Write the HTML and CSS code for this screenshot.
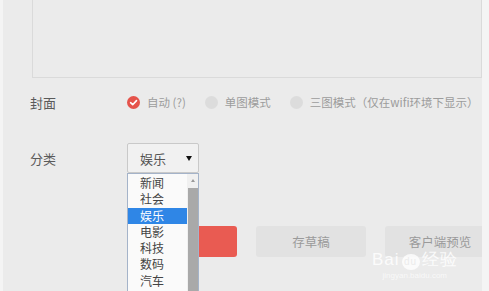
FILE: index.html
```html
<!DOCTYPE html>
<html>
<head>
    <meta charset="UTF-8">
    <meta name="viewport" content="width=device-width, initial-scale=1.0">
    <title>发布文章</title>
    <link rel="stylesheet" href="styles.css">
</head>

<body>

    <div class="panel">
        <div class="editor"></div>

        <div class="row cover-row">
            <span class="label">封面</span>
            <div class="options">
                <span class="option">
                    <span class="radio checked">
                        <svg width="13" height="13" viewBox="0 0 13 13"><path d="M3.6 6.7 L5.7 8.7 L9.5 4.6" fill="none" stroke="#fff" stroke-width="1.6" stroke-linecap="round" stroke-linejoin="round"/></svg>
                    </span>
                    自动 (?)
                </span>
                <span class="option"><span class="radio"></span>单图模式</span>
                <span class="option"><span class="radio"></span>三图模式（仅在wifi环境下显示）</span>
            </div>
        </div>

        <div class="row category-row">
            <span class="label">分类</span>
            <div class="select-wrap">
                <div class="select">
                    <span>娱乐</span>
                    <span class="arrow"></span>
                </div>
                <div class="dropdown">
                    <ul class="list">
                        <li>新闻</li>
                        <li>社会</li>
                        <li class="active">娱乐</li>
                        <li>电影</li>
                        <li>科技</li>
                        <li>数码</li>
                        <li>汽车</li>
                    </ul>
                    <div class="scrollbar">
                        <span class="up"></span>
                        <span class="thumb"></span>
                    </div>
                </div>
            </div>
        </div>

        <div class="actions">
            <button class="btn btn-primary">发表</button>
            <button class="btn">存草稿</button>
            <button class="btn">客户端预览</button>
        </div>

        <!-- watermark -->
        <div class="watermark">
            <div class="wm-logo">Bai<span class="wm-paw">du</span>经验</div>
            <div class="wm-url">jingyan.baidu.com</div>
        </div>
    </div>

</body>
</html>
```

FILE: styles.css
```css
body {
    margin: 0;
    padding: 0;
    background-color: #f4f4f4;
    font-family: "Noto Sans CJK SC", "Noto Sans", sans-serif;
    color: #555;
    overflow: hidden;
}

.panel {
    position: relative;
    margin-left: 3px;
    width: 479px;
    height: 291px;
    background-color: #ebebeb;
    overflow: hidden;
}

.editor {
    margin-left: 29px;
    height: 77px;
    border-left: 1px solid #dadada;
    border-bottom: 1px solid #dadada;
    border-right: 1px solid #dadada;
}

.row {
    display: flex;
    align-items: center;
    padding-left: 27px;
}

.label {
    flex: none;
    width: 97px;
    font-size: 13px;
    color: #5a5a5a;
}

.cover-row {
    margin-top: 12px;
    height: 24px;
}

.options {
    flex: none;
    display: flex;
    align-items: center;
    font-size: 11.5px;
    color: #9c9c9c;
    white-space: nowrap;
}

.option {
    flex: none;
    display: flex;
    align-items: center;
    margin-right: 19px;
}

.radio {
    flex: none;
    width: 13px;
    height: 13px;
    border-radius: 50%;
    background-color: #dcdcdc;
    margin-right: 7px;
    display: flex;
}

.radio.checked {
    background-color: #e5534b;
}

.category-row {
    margin-top: 29px;
}

.select-wrap {
    position: relative;
}

.select {
    border: 1px solid #c9c9c9;
    border-radius: 2px;
    background-color: #f1f1f1;
    display: flex;
    align-items: center;
    justify-content: space-between;
    padding: 0 6px 0 12px;
    box-sizing: border-box;
    width: 72px;
    height: 30px;
    font-size: 13px;
    color: #555;
}

.arrow {
    width: 0;
    height: 0;
    border-left: 3px solid transparent;
    border-right: 3px solid transparent;
    border-top: 5px solid #111;
}

.dropdown {
    position: absolute;
    left: 0;
    top: 30px;
    width: 72px;
    height: 130px;
    box-sizing: border-box;
    border: 1px solid #a4b3c9;
    background-color: #fafafa;
    display: flex;
}

.list {
    list-style: none;
    margin: 0;
    padding: 1px 0 0 0;
    flex: 1;
    font-size: 12px;
    color: #444;
}

.list li {
    height: 16.3px;
    line-height: 16.3px;
    padding-left: 12px;
}

.list li.active {
    background-color: #2f86e6;
    color: #fff;
}

.scrollbar {
    width: 11px;
    background-color: #f0f0f0;
    display: flex;
    flex-direction: column;
    align-items: center;
}

.up {
    margin-top: 5px;
    width: 0;
    height: 0;
    border-left: 2px solid transparent;
    border-right: 2px solid transparent;
    border-bottom: 3px solid #999;
}

.thumb {
    margin-top: 6px;
    width: 10px;
    flex: 1;
    background-color: #a9a9a9;
}

.actions {
    display: flex;
    gap: 19px;
    margin-top: 53px;
    margin-left: 124px;
}

.btn {
    flex: none;
    width: 110px;
    height: 31px;
    border: none;
    border-radius: 3px;
    background-color: #e2e2e2;
    color: #9a9a9a;
    font-family: "Noto Sans CJK SC", sans-serif;
    font-size: 12.5px;
}

.btn-primary {
    background-color: #e95b52;
    color: #fff;
}

.watermark {
    position: absolute;
    left: 369px;
    top: 251px;
    color: rgba(255, 255, 255, 0.85);
    text-align: center;
}

.wm-logo {
    font-family: "Liberation Sans", sans-serif;
    font-size: 17px;
    line-height: 18px;
    letter-spacing: 1px;
}

.wm-paw {
    display: inline-block;
    font-size: 10px;
    line-height: 16px;
    width: 18px;
    border-radius: 50%;
    background-color: rgba(255, 255, 255, 0.8);
    color: #ebebeb;
    margin: 0 2px;
}

.wm-url {
    font-family: "Liberation Sans", sans-serif;
    font-size: 8px;
    line-height: 10px;
    color: rgba(255, 255, 255, 0.7);
    margin-top: 1px;
}
```
